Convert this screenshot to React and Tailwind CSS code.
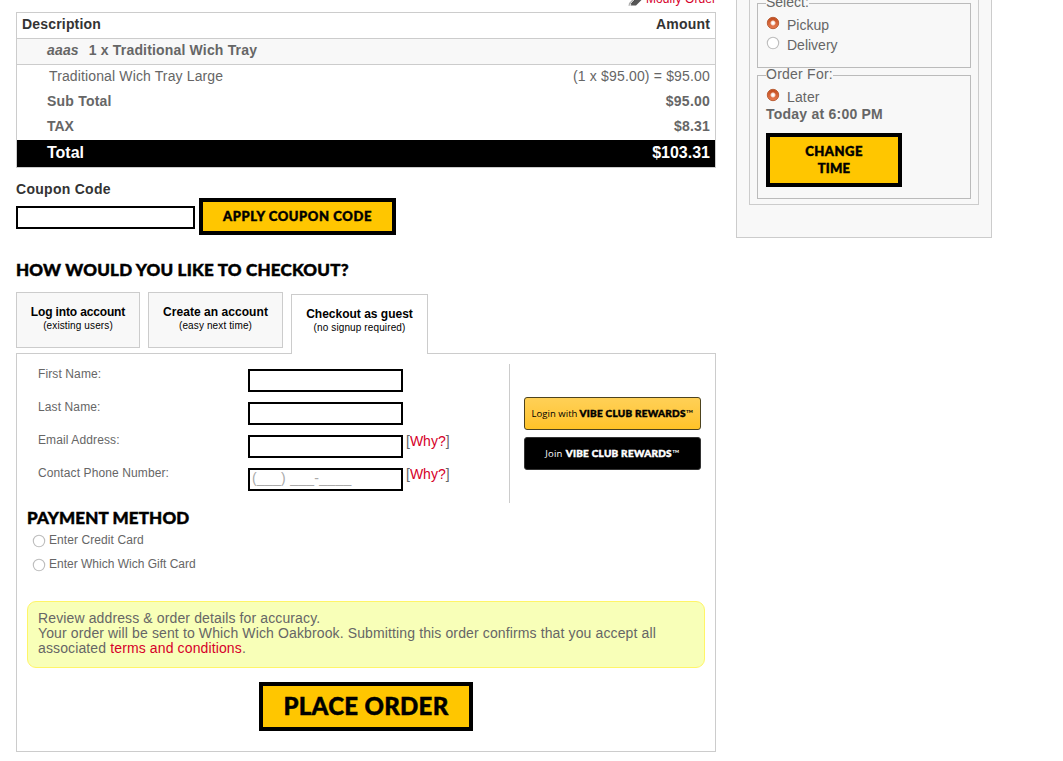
import React from "react";

const display = "font-['Lato',sans-serif] font-black [-webkit-text-stroke:0.45px_currentColor]";

function T({ className = "", children }) {
  return <span className={"inline-block whitespace-nowrap " + className}>{children}</span>;
}

function Radio({ checked }) {
  return checked ? (
    <svg width="14" height="14" viewBox="0 0 14 14" className="block shrink-0">
      <defs>
        <linearGradient id="radio-fill" x1="0" y1="0" x2="0" y2="1">
          <stop offset="0" stopColor="#c04a1c" />
          <stop offset="1" stopColor="#ea7d52" />
        </linearGradient>
      </defs>
      <circle cx="7" cy="7" r="5.7" fill="url(#radio-fill)" stroke="#bb6038" strokeWidth="1" />
      <circle cx="7" cy="7" r="2.2" fill="#fff" stroke="#f0c3ae" strokeWidth="0.8" />
    </svg>
  ) : (
    <svg width="14" height="14" viewBox="0 0 14 14" className="block shrink-0">
      <circle cx="7" cy="7" r="5.7" fill="#fff" stroke="#bdbdbd" strokeWidth="1.1" />
    </svg>
  );
}

function Row({ className, left, right }) {
  return <div className={"flex justify-between pr-[5px] pt-[3px] " + className}>{left}{right}</div>;
}

function OrderTable() {
  return (
    <div className="h-[156px] border border-[#ccc] leading-4">
      <Row className="h-[26px] border-b border-[#ccc] pl-[5px] font-bold tracking-[0.18px] text-[#333]" left={<T>Description</T>} right={<T>Amount</T>} />
      <Row
        className="h-[26px] border-b border-[#ccc] bg-[#f8f8f8] pl-[30px] font-bold tracking-[0.17px]"
        left={<span className="flex gap-[10px]"><T className="italic">aaas</T><T>1 x Traditional Wich Tray</T></span>}
      />
      <Row className="h-[25px] pl-[32px]" left={<T className="tracking-[0.13px]">Traditional Wich Tray Large</T>} right={<T className="tracking-[0.17px]">(1 x $95.00) = $95.00</T>} />
      <Row className="h-[25px] pl-[30px] font-bold tracking-[0.22px]" left={<T>Sub Total</T>} right={<T>$95.00</T>} />
      <Row className="h-[25px] pl-[30px] font-bold" left={<T>TAX</T>} right={<T className="tracking-[0.2px]">$8.31</T>} />
      <Row className="h-[27px] bg-black pl-[30px] text-base leading-[19px] font-bold text-white" left={<T>Total</T>} right={<T>$103.31</T>} />
    </div>
  );
}

function Field({ label, why, placeholder }) {
  return (
    <div className="flex h-[33px]">
      <div className="w-[210px] pt-[3px] text-xs leading-[14px] tracking-[0.11px]"><T>{label}</T></div>
      <div className="mt-[5px] h-[23px] w-[155px] border-2 border-black bg-white pl-[2px] leading-[17px] tracking-[0.27px] text-[#aaa]">
        {placeholder && <T>{placeholder}</T>}
      </div>
      {why && <div className="ml-[3px] pt-[3px] leading-4"><T>[<span className="text-[#d6002a]">Why?</span>]</T></div>}
    </div>
  );
}

function Tab({ title, sub, className, titleClass = "" }) {
  return (
    <div className={"border border-[#ccc] pt-[12px] text-center text-black " + className}>
      <div className="text-xs leading-[14px] font-bold"><T className={titleClass}>{title}</T></div>
      <div className="text-[10px] leading-[13px] tracking-[0.12px]"><T>{sub}</T></div>
    </div>
  );
}

function Legend({ className = "", children }) {
  return (
    <div className="-mt-px mb-[6px] flex h-px w-fit items-start bg-[#f8f8f8] leading-4">
      <T className={"-mt-[9px] " + className}>{children}</T>
    </div>
  );
}

function Option({ checked, className, children }) {
  return (
    <div className={"flex gap-[7px] pt-[7px] leading-4 " + className}>
      <div className="-mt-px"><Radio checked={checked} /></div>
      <T>{children}</T>
    </div>
  );
}

function RewardsLabel() {
  return <T className={display + " text-[10px] tracking-[0.26px]"}>VIBE CLUB REWARDS<span className="font-normal [-webkit-text-stroke:0]">™</span></T>;
}

const yellowButton = "flex items-center justify-center border-4 border-black bg-[#ffc600] text-black";

export default function App() {
  return (
    <div className="flex h-[761px] w-[1063px] items-start overflow-hidden bg-white font-['Liberation_Sans',Arial,sans-serif] text-sm text-[#666]">
      <main className="ml-4 w-[700px] shrink-0">
        <div className="-mt-2 flex h-5 items-start justify-end gap-1">
          <svg width="14" height="14" viewBox="0 0 14 14" className="block">
            <path d="M2.5 13.5 4.5 10 11 3 15 6.5 8 13.5Z" fill="#555" />
            <path d="M0.5 14 1 11 9 3 10 4 3 11 2 13.5Z" fill="#b0b0b0" />
            <path d="M3 12 11 4" stroke="#444" strokeWidth="0.8" />
          </svg>
          <T className="text-xs leading-[14px] tracking-[0.06px] text-[#d6002a]">Modify Order</T>
        </div>
        <OrderTable />
        <div className="pt-[13px] leading-4 font-bold tracking-[0.28px] text-[#333]"><T>Coupon Code</T></div>
        <div className="flex gap-1 pt-[1px]">
          <div className="mt-2 h-[23px] w-[179px] border-2 border-black bg-white" />
          <button className={yellowButton + " h-[37px] w-[197px]"}><T className={display + " text-[13px] tracking-[0.6px]"}>APPLY COUPON CODE</T></button>
        </div>
        <h2 className="flex h-[57px] items-start pt-[24px] text-black"><T className={display + " text-[17px] leading-[22px] tracking-[0.2px]"}>HOW WOULD YOU LIKE TO CHECKOUT?</T></h2>
        <div className="flex h-[61px] gap-2">
          <Tab className="h-[56px] w-[124px] bg-[#f8f8f8]" titleClass="tracking-[-0.15px]" title="Log into account" sub="(existing users)" />
          <Tab className="h-[56px] w-[135px] bg-[#f8f8f8]" titleClass="tracking-[0.05px]" title="Create an account" sub="(easy next time)" />
          <Tab className="z-10 mt-[2px] h-[60px] w-[137px] border-b-0 bg-white" title="Checkout as guest" sub="(no signup required)" />
        </div>
        <section className="h-[399px] border border-[#ccc] px-[10px] pt-[10px]">
          <div className="flex h-[139px]">
            <div className="w-[483px] border-r border-[#ccc] pl-[11px]">
              <Field label="First Name:" />
              <Field label="Last Name:" />
              <Field label="Email Address:" why />
              <Field label="Contact Phone Number:" why placeholder="(___) ___-____" />
            </div>
            <div className="ml-[14px] flex flex-col gap-[7px] pt-[33px] text-black">
              <div className="flex h-[33px] w-[177px] items-center justify-center gap-[2px] rounded-[3px] border border-[#4d431e] bg-linear-to-b from-[#ffd056] to-[#ffc326]">
                <T className="font-['Open_Sans',sans-serif] text-[9.5px] tracking-[0.05px]">Login with</T>
                <RewardsLabel />
              </div>
              <div className="flex h-[33px] w-[177px] items-center justify-center gap-[3px] rounded-[3px] border border-[#333] bg-black text-white">
                <T className="font-['Open_Sans',sans-serif] text-[9.5px] tracking-[0.2px]">Join</T>
                <RewardsLabel />
              </div>
            </div>
          </div>
          <h2 className="flex h-[29px] pt-[4px] text-black"><T className={display + " text-[17px] leading-[22px] tracking-[0.13px]"}>PAYMENT METHOD</T></h2>
          <div className="flex h-[24px] gap-[3px] pl-[5px] text-xs leading-[14px]"><div className="pt-[2px]"><Radio /></div><T className="mt-px tracking-[0.08px]">Enter Credit Card</T></div>
          <div className="flex h-[24px] gap-[3px] pl-[5px] text-xs leading-[14px]"><div className="pt-[2px]"><Radio /></div><T className="mt-px">Enter Which Wich Gift Card</T></div>
          <div className="mt-[21px] h-[67px] w-[678px] rounded-[9px] border border-[#fff568] bg-[#f8ffb8] px-[10px] pt-[9px] leading-[15px] tracking-[0.125px]">
            <div><T>Review address &amp; order details for accuracy.</T></div>
            <div><T>Your order will be sent to Which Wich Oakbrook. Submitting this order confirms that you accept all</T></div>
            <div><T>associated <span className="text-[#d6002a]">terms and conditions</span>.</T></div>
          </div>
          <div className="pt-[14px] pl-[232px]">
            <button className={yellowButton + " h-[49px] w-[214px]"}><T className={display + " text-[24px] tracking-[0.3px]"}>PLACE ORDER</T></button>
          </div>
        </section>
      </main>
      <aside className="ml-5 h-[238px] w-[256px] shrink-0 border border-t-0 border-[#ccc] bg-[#f8f8f8] px-3">
        <div className="h-[205px] border border-t-0 border-[#ccc] px-[7px] pt-[3px]">
          <div className="h-[65px] border border-[#bbb] pl-2">
            <Legend>Select:</Legend>
            <Option checked className="h-[20px]">Pickup</Option>
            <Option className="h-[20px]">Delivery</Option>
          </div>
          <div className="mt-[7px] h-[124px] border border-[#bbb] pl-2">
            <Legend className="tracking-[0.24px]">Order For:</Legend>
            <Option checked className="h-[24px] tracking-[0.15px]">Later</Option>
            <div className="leading-4 font-bold tracking-[0.23px]"><T>Today at 6:00 PM</T></div>
            <button className={yellowButton + " " + display + " mt-[11px] h-[54px] w-[136px] flex-col text-[13px] leading-[17px] tracking-[0.5px]"}><T>CHANGE</T><T className="tracking-[0.2px]">TIME</T></button>
          </div>
        </div>
      </aside>
    </div>
  );
}
